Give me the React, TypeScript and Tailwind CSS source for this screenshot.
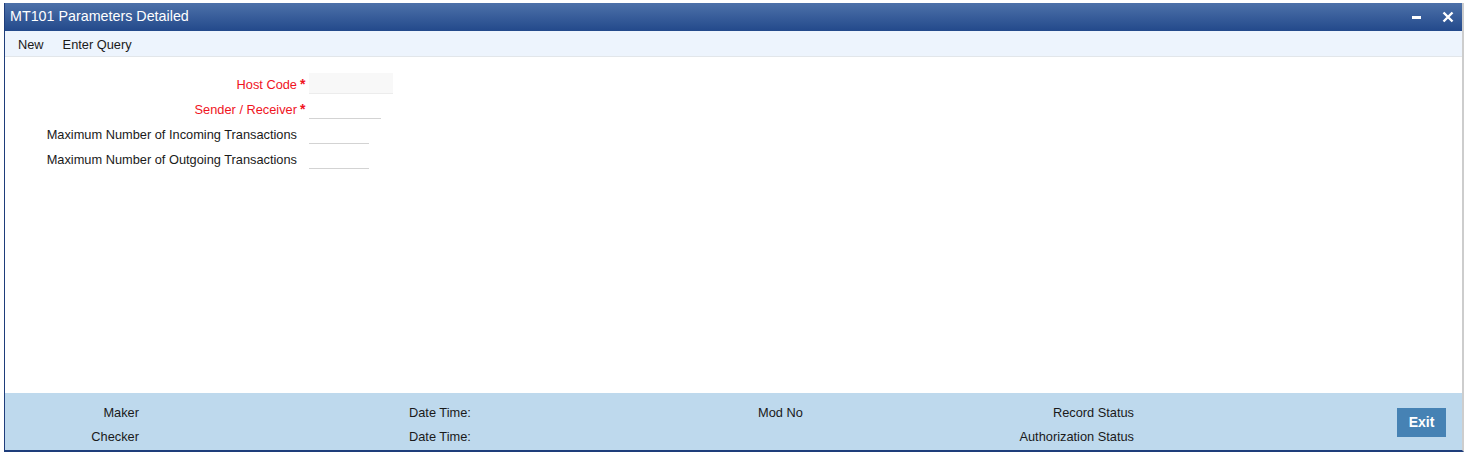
export default function App() {
  const font = { fontFamily: '"Liberation Sans", Arial, sans-serif' }

  return (
    <div className="w-[1467px] h-[454px] bg-white overflow-hidden" style={font}>
      <div className="ml-[4px] mt-[3px] w-[1460px] h-[449px] flex flex-col border-l border-l-[#1e3d7b] border-r-2 border-r-[#cdcdcd] border-b-2 border-b-[#1e3d7b]">
        {/* Title bar */}
        <div className="h-[28px] flex items-center justify-between bg-gradient-to-b from-[#4d71a9] to-[#23498b] pl-[5px] pr-[8px]">
          <span className="text-white text-[14.3px]">MT101 Parameters Detailed</span>
          <div className="flex items-center gap-[20px]">
            <svg width="10" height="12" viewBox="0 0 10 12">
              <rect x="0" y="5" width="9" height="3" fill="#fff" />
            </svg>
            <svg width="12" height="12" viewBox="0 0 12 12">
              <path d="M1.5 1.5 L10.5 10.5 M10.5 1.5 L1.5 10.5" stroke="#fff" strokeWidth="2.4" />
            </svg>
          </div>
        </div>

        {/* Toolbar */}
        <div className="h-[26px] flex items-center gap-[19px] pl-[13px] pt-[2px] bg-[#edf4fd] border-b border-b-[#e2e6ea] text-[12.8px] text-[#1a1a1a]">
          <span>New</span>
          <span>Enter Query</span>
        </div>

        {/* Form */}
        <div className="flex-1 pt-[16px] flex flex-col gap-[4px] text-[12.8px]">
          <div className="flex items-center h-[21px]">
            <span className="w-[292px] pt-[2px] text-right text-[#f0141e]">Host Code</span>
            <span className="w-[12px] pl-[3px] pt-[2px] text-[14px] font-bold text-[#f0141e]">*</span>
            <div className="w-[84px] h-[21px] bg-[#f8f8f8] border-b border-b-[#ececec]" />
          </div>
          <div className="flex items-center h-[21px]">
            <span className="w-[292px] pt-[2px] text-right text-[#f0141e]">Sender / Receiver</span>
            <span className="w-[12px] pl-[3px] pt-[2px] text-[14px] font-bold text-[#f0141e]">*</span>
            <div className="w-[72px] h-[21px] bg-white border-b border-b-[#d3d3d3]" />
          </div>
          <div className="flex items-center h-[21px]">
            <span className="w-[292px] pt-[2px] text-right text-[#1a1a1a]">Maximum Number of Incoming Transactions</span>
            <span className="w-[12px]" />
            <div className="w-[60px] h-[21px] bg-white border-b border-b-[#d3d3d3]" />
          </div>
          <div className="flex items-center h-[21px]">
            <span className="w-[292px] pt-[2px] text-right text-[#1a1a1a]">Maximum Number of Outgoing Transactions</span>
            <span className="w-[12px]" />
            <div className="w-[60px] h-[21px] bg-white border-b border-b-[#d3d3d3]" />
          </div>
        </div>

        {/* Footer */}
        <div className="h-[57px] bg-[#bed9ed] flex items-start pt-[8px] text-[12.8px] text-[#1a1a1a]">
          <div className="flex flex-col">
            <div className="h-[24px] flex items-center">
              <span className="w-[134px] text-right">Maker</span>
              <span className="ml-[270px] w-[349px]">Date Time:</span>
              <div className="w-[376px] flex justify-between">
                <span>Mod No</span>
                <span>Record Status</span>
              </div>
            </div>
            <div className="h-[24px] flex items-center">
              <span className="w-[134px] text-right">Checker</span>
              <span className="ml-[270px] w-[349px]">Date Time:</span>
              <div className="w-[376px] flex justify-end">
                <span>Authorization Status</span>
              </div>
            </div>
          </div>
          <button className="ml-auto mr-[16px] mt-[7px] w-[49px] h-[29px] bg-[#4682b4] text-white font-bold text-[14px]">
            Exit
          </button>
        </div>
      </div>
    </div>
  )
}
